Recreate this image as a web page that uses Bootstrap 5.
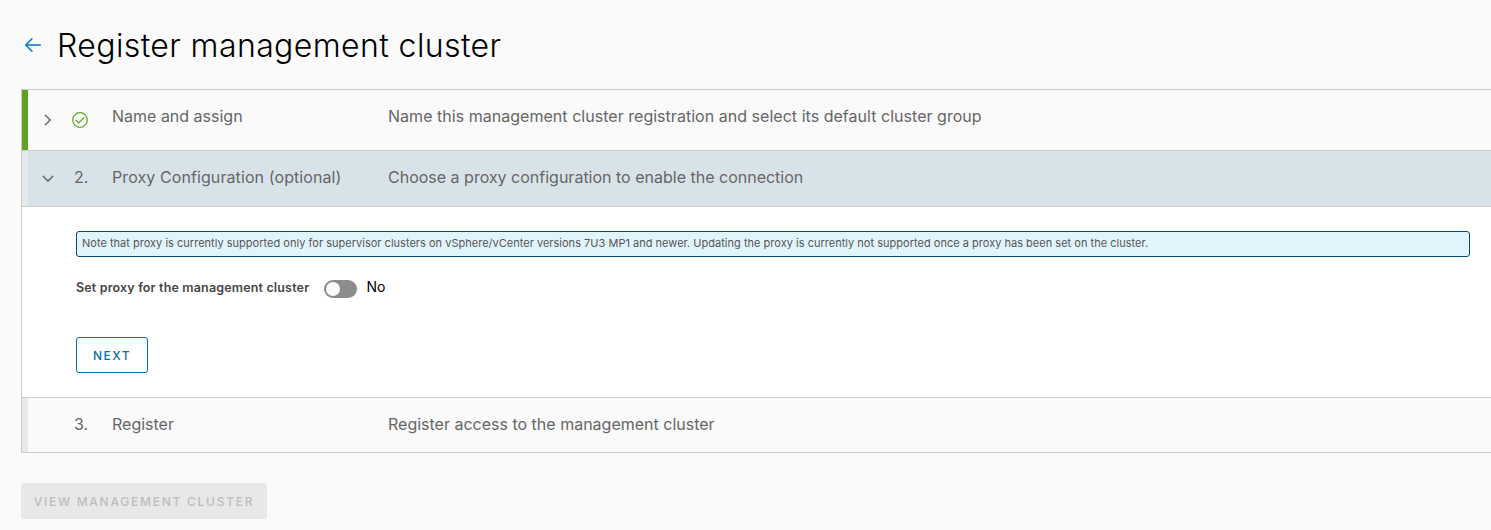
<!DOCTYPE html>
<html lang="en">
<head>
<meta charset="utf-8">
<meta name="viewport" content="width=device-width, initial-scale=1">
<title>Register management cluster</title>
<link href="https://cdn.jsdelivr.net/npm/bootstrap@5.3.0/dist/css/bootstrap.min.css" rel="stylesheet">
<style>
body{background:#fafafa;color:#000;font-family:Inter,"Open Sans",sans-serif;font-size:14px;line-height:24px;height:530px}
.page{padding:25px 0 0 21px}
.page-head{height:40px;margin-bottom:24px}
.back-link{width:24px;height:40px;margin-right:12px;color:#0079b8}
.page-title{font-size:32px;font-weight:300;line-height:40px;letter-spacing:.4px;padding-top:2px}
.stepper{border:1px solid #ccc;border-right:0}
.step-head{color:#666;font-size:16px;border-bottom:1px solid #ccc;background:linear-gradient(to right,var(--bar,#e8e8e8) 6px,var(--fill,#fafafa) 6px)}
.step-done{--bar:#5aa220;height:61px}
.step-open{--fill:#d8e3e9;height:56px;padding-bottom:3px}
.step-last{height:54px;border-bottom:0;padding-bottom:2px}
.step-caret{width:40px;margin-left:6px;display:flex;justify-content:center}
.step-no{width:44px;padding-left:6px}
.step-name{width:276px}
.step-body{height:191px;background:#fff;border-bottom:1px solid #ccc;padding:24px 21px 0 54px}
.note{height:26px;background:#e1f4fc;border:1px solid #004f73;border-radius:3px;color:#565656;font-size:11px;line-height:23px;letter-spacing:.016px;padding:0 5px;margin-bottom:18px}
.set-label{font-size:12.5px;font-weight:600;color:#454545;width:248px;letter-spacing:.16px;line-height:22px;padding-top:2px}
.toggle{width:33px;height:18px;border-radius:9px;background:#8c8c8c;padding:2px;margin:3px 9.5px 0 0}
.toggle span{display:block;width:14px;height:14px;border-radius:50%;background:#fafafa}
.btn-step{height:36px;border-radius:3px;font-size:12px;font-weight:500;padding:0;letter-spacing:1.5px}
.btn-next{width:72px;border:1px solid #0072a3;color:#0072a3;background:#fff;margin-top:38px;line-height:36px}
.btn-view,.btn-view:disabled{width:246px;border:0;background:#e8e8e8;color:#bdbdbd;opacity:1;margin-top:30px;line-height:37px;letter-spacing:1.75px}
.long-desc{letter-spacing:.03px}
.opt-name{letter-spacing:.09px}
</style>
</head>
<body class="overflow-hidden">
<main class="page">
  <header class="page-head d-flex align-items-center">
    <a href="#" class="back-link d-flex align-items-center justify-content-center" aria-label="Back">
      <svg width="18" height="16" viewBox="0 0 18 16" fill="none" stroke="currentColor" stroke-width="1.5" stroke-linecap="round" stroke-linejoin="round"><path d="M16.3 8H2M8 1.7 1.8 8 8 14.2"/></svg>
    </a>
    <h1 class="page-title m-0">Register management cluster</h1>
  </header>
  <section class="stepper">
    <div class="step-head step-done d-flex align-items-center">
      <span class="step-caret"><svg width="12" height="12" viewBox="0 0 12 12" fill="none" stroke="#666" stroke-width="1.5" stroke-linecap="round"><path d="M3.3 1.2 8.1 6l-4.8 4.8"/></svg></span>
      <span class="step-no d-flex ps-1"><svg width="16" height="16" viewBox="0 0 16 16" fill="none" stroke="#5aa220" stroke-width="1.2"><circle cx="8" cy="8" r="7.3"/><path d="m4 8.3 2.7 2.6L12 5.6" stroke-linecap="round"/></svg></span>
      <span class="step-name pb-2">Name and assign</span>
      <span class="long-desc pb-2">Name this management cluster registration and select its default cluster group</span>
    </div>
    <div class="step-head step-open d-flex align-items-center">
      <span class="step-caret"><svg width="12" height="14" viewBox="0 0 12 14" fill="none" stroke="#666" stroke-width="1.5" stroke-linecap="round"><path d="M1.2 6.3 6 11.1l4.8-4.8"/></svg></span>
      <span class="step-no">2.</span>
      <span class="step-name opt-name">Proxy Configuration (optional)</span>
      <span>Choose a proxy configuration to enable the connection</span>
    </div>
    <div class="step-body">
      <div class="note text-nowrap">Note that proxy is currently supported only for supervisor clusters on vSphere/vCenter versions 7U3 MP1 and newer. Updating the proxy is currently not supported once a proxy has been set on the cluster.</div>
      <div class="d-flex align-items-center">
        <span class="set-label">Set proxy for the management cluster</span>
        <span class="toggle" role="switch" aria-checked="false"><span></span></span>
        <span>No</span>
      </div>
      <button type="button" class="btn btn-step btn-next">NEXT</button>
    </div>
    <div class="step-head step-last d-flex align-items-center">
      <span class="step-caret"></span>
      <span class="step-no">3.</span>
      <span class="step-name">Register</span>
      <span>Register access to the management cluster</span>
    </div>
  </section>
  <button type="button" class="btn btn-step btn-view" disabled>VIEW MANAGEMENT CLUSTER</button>
</main>
<script src="https://cdn.jsdelivr.net/npm/bootstrap@5.3.0/dist/js/bootstrap.bundle.min.js"></script>
</body>
</html>
